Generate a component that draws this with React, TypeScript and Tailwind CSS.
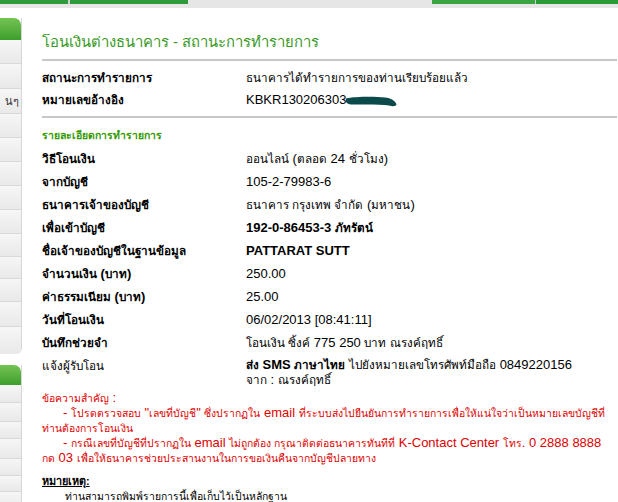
import React from "react";

const TH = /([\u0E00-\u0E7F]+(?:[ ]+[\u0E00-\u0E7F]+)*)/;

function T({ s, c }: { s: string; c: string }) {
  return (
    <>
      {s.split(TH).map((p, i) =>
        i % 2 === 1 ? (
          <span key={i} className={c}>
            {p}
          </span>
        ) : (
          <React.Fragment key={i}>{p}</React.Fragment>
        )
      )}
    </>
  );
}

const rows: { label: string; value: string; boldValue?: boolean }[] = [
  { label: "วิธีโอนเงิน", value: "ออนไลน์ (ตลอด 24 ชั่วโมง)" },
  { label: "จากบัญชี", value: "105-2-79983-6" },
  { label: "ธนาคารเจ้าของบัญชี", value: "ธนาคาร กรุงเทพ จำกัด (มหาชน)" },
  { label: "เพื่อเข้าบัญชี", value: "192-0-86453-3 ภัทรัตน์", boldValue: true },
  { label: "ชื่อเจ้าของบัญชีในฐานข้อมูล", value: "PATTARAT SUTT", boldValue: true },
  { label: "จำนวนเงิน (บาท)", value: "250.00" },
  { label: "ค่าธรรมเนียม (บาท)", value: "25.00" },
  { label: "วันที่โอนเงิน", value: "06/02/2013 [08:41:11]" },
  { label: "บันทึกช่วยจำ", value: "โอนเงิน ซิ้งค์ 775 250 บาท ณรงค์ฤทธิ์" },
];

const TT = "text-[11.7px]";
const TR = "text-[10.4px]";

function SideItem({ h }: { h: string }) {
  return <div className={`${h} border-b border-[#d9d9d9] bg-gradient-to-b from-[#f6f6f6] to-[#e9e9e9]`} />;
}

function Row({ label, children, boldLabel = true }: { label: string; children: React.ReactNode; boldLabel?: boolean }) {
  return (
    <div className="grid grid-cols-[204px_1fr] whitespace-nowrap">
      <div className={boldLabel ? "font-bold" : ""}>
        <T s={label} c={TT} />
      </div>
      <div>{children}</div>
    </div>
  );
}

export default function App() {
  return (
    <div className="min-h-[502px] bg-white text-[13px] text-black font-['Liberation_Sans',sans-serif]">
      <div className="flex h-[4px]">
        <div className="w-[68px] bg-[#2f9a3a]" />
        <div className="w-[2px] bg-[#d0d0d0]" />
        <div className="w-[118px] bg-[#2f9a3a]" />
        <div className="w-[244px] bg-[#e6e6e6]" />
        <div className="w-[103px] bg-[#3aa440]" />
        <div className="w-[1px] bg-[#d0d0d0]" />
        <div className="flex-1 bg-[#2a9a35]" />
      </div>
      <div className="h-[4px] bg-[#e6e6e6]" />
      <div className="flex">
        <div className="w-[22px] shrink-0 pt-[10px]">
          <div className="overflow-hidden rounded-br-[6px] border-r border-[#d6d6d6]">
            <div className="h-[22px] rounded-tr-[7px] bg-gradient-to-b from-[#74c452] to-[#3c9e2c]" />
            <SideItem h="h-[24px]" />
            <SideItem h="h-[25px]" />
            <div className="flex h-[25px] items-center justify-end border-b border-[#d9d9d9] bg-gradient-to-b from-[#f6f6f6] to-[#e9e9e9] pr-[2px] text-[11px] text-[#333]">นๆ</div>
            <SideItem h="h-[24px]" />
            <SideItem h="h-[24px]" />
            <SideItem h="h-[24px]" />
            <SideItem h="h-[24px]" />
            <SideItem h="h-[24px]" />
            <SideItem h="h-[23px]" />
            <SideItem h="h-[22px]" />
            <SideItem h="h-[23px]" />
            <SideItem h="h-[25px]" />
            <div className="h-[27px] bg-gradient-to-b from-[#f6f6f6] to-[#e9e9e9]" />
          </div>
          <div className="mt-[11px] overflow-hidden border-r border-[#d6d6d6]">
            <div className="h-[20px] rounded-tr-[7px] bg-gradient-to-b from-[#74c452] to-[#3c9e2c]" />
            <SideItem h="h-[18px]" />
            <SideItem h="h-[19px]" />
            <SideItem h="h-[17px]" />
            <SideItem h="h-[20px]" />
            <SideItem h="h-[17px]" />
            <SideItem h="h-[16px]" />
            <SideItem h="h-[18px]" />
          </div>
        </div>
        <div className="min-w-0 flex-1 pl-[20px] pr-[1px] pt-[24px]">
          <div className="h-[20px] whitespace-nowrap text-[14.8px] leading-[20px] text-[#379a24]">โอนเงินต่างธนาคาร - สถานะการทำรายการ</div>
          <div className="mt-[7px] h-[2px] bg-[#c8c8c8]" />
          <div className="pt-[6px] leading-[22px]">
            <Row label="สถานะการทำรายการ">
              <T s="ธนาคารได้ทำรายการของท่านเรียบร้อยแล้ว" c={TT} />
            </Row>
            <Row label="หมายเลขอ้างอิง">
              <div className="flex h-[22px] items-center">
                <span>KBKR130206303</span>
                <svg width="52" height="11" viewBox="0 0 52 11" className="ml-[-1px] mt-[2px] block shrink-0">
                  <path d="M1 2.5 C10 0.5 30 0.5 40 1.5 C46 2 50 5 51.5 8 C51.5 10.3 48 10.6 44 9.6 C35 8.2 20 8.6 8 8.6 C3 8.6 0 7 1 2.5 Z" fill="#0b4a4a" />
                </svg>
              </div>
            </Row>
          </div>
          <div className="mt-[5px] h-[2px] bg-[#c8c8c8]" />
          <div className="mt-[6px] text-[10.4px] font-bold leading-[23px] text-[#339900]">รายละเอียดการทำรายการ</div>
          <div className="leading-[23px]">
            {rows.map((r) => (
              <Row key={r.label} label={r.label}>
                <span className={r.boldValue ? "font-bold" : ""}>
                  <T s={r.value} c={TT} />
                </span>
              </Row>
            ))}
          </div>
          <div className="grid grid-cols-[204px_1fr] whitespace-nowrap">
            <div className="leading-[23px]">
              <T s="แจ้งผู้รับโอน" c={TT} />
            </div>
            <div className="pt-[3px] leading-[15px]">
              <div>
                <span className="font-bold">
                  <T s="ส่ง SMS ภาษาไทย" c={TT} />
                </span>{" "}
                <T s="ไปยังหมายเลขโทรศัพท์มือถือ 0849220156" c={TT} />
              </div>
              <div>
                <T s="จาก : ณรงค์ฤทธิ์" c={TT} />
              </div>
            </div>
          </div>
          <div className="mt-[4px] whitespace-nowrap text-[13px] leading-[14px] text-[#e00000]">
            <div>
              <T s="ข้อความสำคัญ :" c={TR} />
            </div>
            <div className="pl-[21px]">
              <T s={'- โปรดตรวจสอบ "เลขที่บัญชี" ซึ่งปรากฏใน email ที่ระบบส่งไปยืนยันการทำรายการเพื่อให้แน่ใจว่าเป็นหมายเลขบัญชีที่'} c={TR} />
            </div>
            <div>
              <T s="ท่านต้องการโอนเงิน" c={TR} />
            </div>
            <div className="pl-[21px]">
              <T s="- กรณีเลขที่บัญชีที่ปรากฏใน email ไม่ถูกต้อง กรุณาติดต่อธนาคารทันทีที่ K-Contact Center โทร. 0 2888 8888" c={TR} />
            </div>
            <div>
              <T s="กด 03 เพื่อให้ธนาคารช่วยประสานงานในการขอเงินคืนจากบัญชีปลายทาง" c={TR} />
            </div>
          </div>
          <div className="mt-[8px] whitespace-nowrap text-[12.3px] leading-[15px]">
            <div className="text-[10.8px] font-bold underline">หมายเหตุ:</div>
            <div className="pl-[23px]">
              <T s="ท่านสามารถพิมพ์รายการนี้เพื่อเก็บไว้เป็นหลักฐาน" c={TR} />
            </div>
          </div>
        </div>
      </div>
    </div>
  );
}
